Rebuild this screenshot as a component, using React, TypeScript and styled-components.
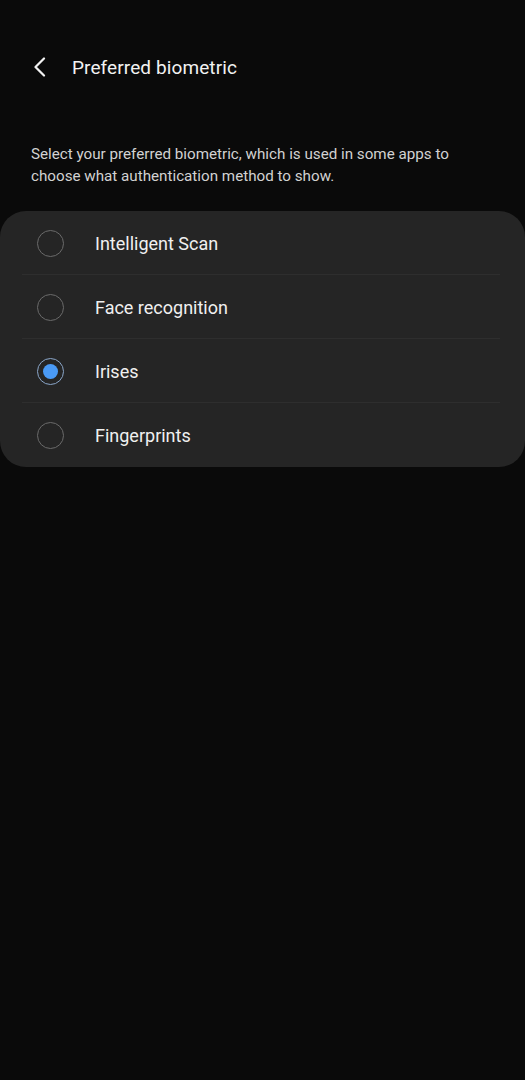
import React, { useState } from "react";
import styled, { createGlobalStyle } from "styled-components";

const GlobalStyle = createGlobalStyle`
  html, body {
    margin: 0;
    padding: 0;
    background: #0a0a0a;
  }
  body {
    font-family: Roboto, "Noto Sans", "Liberation Sans", sans-serif;
    -webkit-font-smoothing: antialiased;
  }
`;

const Page = styled.div`
  width: 525px;
  min-height: 1080px;
  background: #0a0a0a;
  display: flex;
  flex-direction: column;
`;

const Header = styled.header`
  height: 56px;
  margin-top: 39px;
  display: flex;
  align-items: center;
  padding-left: 31px;
`;

const BackButton = styled.button`
  width: 16px;
  height: 22px;
  padding: 0;
  border: 0;
  background: none;
  display: flex;
  align-items: center;
  justify-content: center;
  cursor: pointer;
`;

const Title = styled.h1`
  margin: 0 0 0 25px;
  font-size: 19px;
  font-weight: 400;
  color: #f2f2f2;
  letter-spacing: 0.1px;
`;

const Description = styled.p`
  margin: 48px 0 0;
  padding: 0 40px 0 31px;
  font-size: 15.2px;
  line-height: 22px;
  color: #d2d2d2;
`;

const Card = styled.div`
  margin-top: 24px;
  background: #252525;
  border-radius: 26px;
  display: flex;
  flex-direction: column;
`;

const Row = styled.label<{ $divider: boolean }>`
  position: relative;
  height: 64px;
  display: flex;
  align-items: center;
  padding-left: 37px;
  gap: 31px;
  cursor: pointer;

  ${(p) =>
    p.$divider &&
    `
    &::after {
      content: "";
      position: absolute;
      left: 22px;
      right: 25px;
      bottom: 0;
      height: 1px;
      background: #2e2e2e;
    }
  `}
`;

const Radio = styled.span<{ $checked: boolean }>`
  width: 27px;
  height: 27px;
  box-sizing: border-box;
  border-radius: 50%;
  border: 1.5px solid ${(p) => (p.$checked ? "#8aa6c9" : "#6a6a6a")};
  display: flex;
  align-items: center;
  justify-content: center;
  flex-shrink: 0;

  &::after {
    content: "";
    width: 15px;
    height: 15px;
    border-radius: 50%;
    background: #4a9af5;
    display: ${(p) => (p.$checked ? "block" : "none")};
  }
`;

const RowText = styled.span`
  font-size: 18px;
  color: #f0f0f0;
`;

const options = ["Intelligent Scan", "Face recognition", "Irises", "Fingerprints"];

export default function App() {
  const [selected, setSelected] = useState("Irises");

  return (
    <Page>
      <GlobalStyle />
      <Header>
        <BackButton aria-label="Back">
          <svg width="13" height="20" viewBox="0 0 13 20" fill="none">
            <path d="M11 1.5 L2.5 10 L11 18.5" stroke="#f2f2f2" strokeWidth="2.2" strokeLinecap="round" strokeLinejoin="round" />
          </svg>
        </BackButton>
        <Title>Preferred biometric</Title>
      </Header>
      <Description>
        Select your preferred biometric, which is used in some apps to choose what authentication method to show.
      </Description>
      <Card>
        {options.map((opt, i) => (
          <Row key={opt} $divider={i < options.length - 1} onClick={() => setSelected(opt)}>
            <Radio $checked={selected === opt} />
            <RowText>{opt}</RowText>
          </Row>
        ))}
      </Card>
    </Page>
  );
}
